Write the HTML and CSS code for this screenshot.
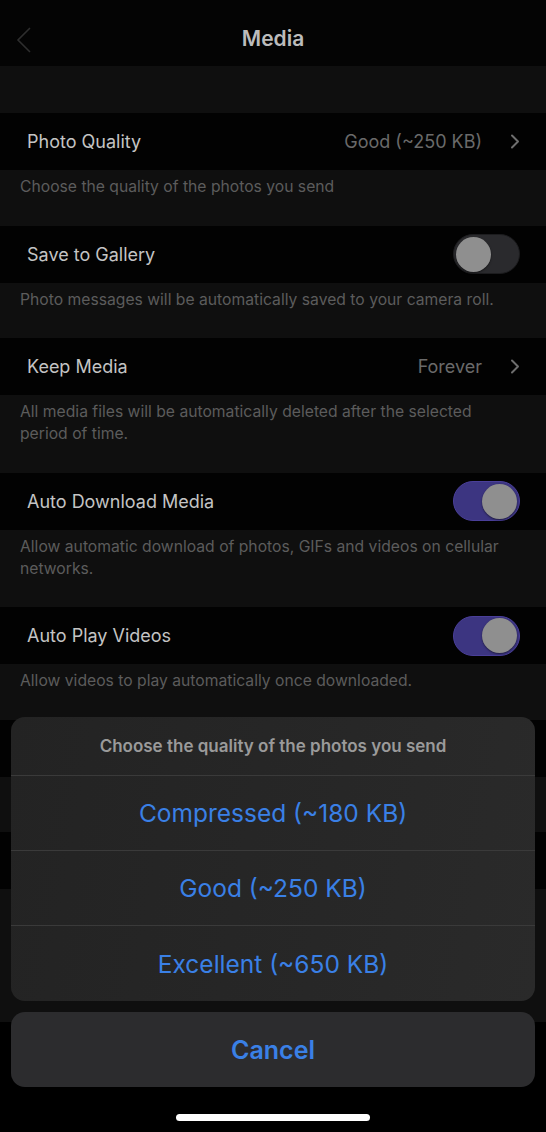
FILE: index.html
```html
<!DOCTYPE html>
<html lang="en">
<head>
<meta charset="utf-8">
<title>Media</title>
<link rel="stylesheet" href="styles.css">
</head>
<body>
<div class="screen">
  <header class="nav">
    <svg class="back" width="16" height="26" viewBox="0 0 16 26"><path d="M14 1 L2 13 L14 25" fill="none" stroke="#2e2e2e" stroke-width="1.6"/></svg>
    <h1 class="title">Media</h1>
  </header>
  <div class="spacer"></div>

  <div class="row">
    <span class="label">Photo Quality</span>
    <span class="value">Good (~250 KB)</span>
    <svg class="chev" width="10" height="15" viewBox="0 0 10 15"><path d="M2 1.5 L8 7.5 L2 13.5" fill="none" stroke="#6e6e6e" stroke-width="2" stroke-linecap="round" stroke-linejoin="round"/></svg>
  </div>
  <p class="foot">Choose the quality of the photos you send</p>

  <div class="row">
    <span class="label">Save to Gallery</span>
    <span class="toggle"><span class="knob"></span></span>
  </div>
  <p class="foot">Photo messages will be automatically saved to your camera roll.</p>

  <div class="row">
    <span class="label">Keep Media</span>
    <span class="value">Forever</span>
    <svg class="chev" width="10" height="15" viewBox="0 0 10 15"><path d="M2 1.5 L8 7.5 L2 13.5" fill="none" stroke="#6e6e6e" stroke-width="2" stroke-linecap="round" stroke-linejoin="round"/></svg>
  </div>
  <p class="foot">All media files will be automatically deleted after the selected period of time.</p>

  <div class="row">
    <span class="label">Auto Download Media</span>
    <span class="toggle on"><span class="knob"></span></span>
  </div>
  <p class="foot">Allow automatic download of photos, GIFs and videos on cellular networks.</p>

  <div class="row">
    <span class="label">Auto Play Videos</span>
    <span class="toggle on"><span class="knob"></span></span>
  </div>
  <p class="foot">Allow videos to play automatically once downloaded.</p>

  <div class="row"></div>
  <p class="foot">&nbsp;</p>
  <div class="row"></div>
  <div class="foot tall"></div>

  <div class="sheet">
    <div class="group">
      <div class="sheet-title">Choose the quality of the photos you send</div>
      <div class="option">Compressed (~180 KB)</div>
      <div class="option">Good (~250 KB)</div>
      <div class="option">Excellent (~650 KB)</div>
    </div>
    <div class="cancel">Cancel</div>
  </div>
  <div class="home"></div>
</div>
</body>
</html>
```
FILE: styles.css
```css
* { box-sizing: border-box; }
html, body { margin: 0; padding: 0; background: #000; }
body {
  font-family: Inter, "Noto Sans", "Liberation Sans", sans-serif;
  width: 546px;
  height: 1132px;
  overflow: hidden;
}
.screen {
  position: relative;
  width: 546px;
  height: 1132px;
  background: #000;
  display: flex;
  flex-direction: column;
}
.nav {
  height: 66px;
  flex: none;
  background: #040404;
  display: flex;
  align-items: center;
  justify-content: center;
  padding-top: 10px;
  position: relative;
}
.back {
  position: absolute;
  left: 16px;
  top: 27px;
}
.title {
  margin: 0;
  font-size: 21px;
  font-weight: 600;
  color: #bcbcbc;
}
.spacer {
  height: 47px;
  flex: none;
  background: #0f0f0f;
}
.row {
  height: 57px;
  flex: none;
  background: #020202;
  display: flex;
  align-items: center;
  padding: 0 26px 0 27px;
}
.label {
  font-size: 18px;
  color: #c4c4c4;
  flex: 1;
}
.value {
  font-size: 18px;
  color: #6a6a6a;
  margin-right: 28px;
}
.chev { flex: none; margin-right: 0; }
.foot {
  margin: 0;
  flex: none;
  background: #0f0f0f;
  padding: 6px 40px 27.5px 20px;
  font-size: 15.7px;
  line-height: 22px;
  color: #5c5c5c;
}
.foot.tall { height: 133px; padding: 0; }
.toggle {
  width: 67px;
  height: 40px;
  border-radius: 20px;
  background: #2a2a2d;
  border: 1px solid #1c1c1e;
  display: flex;
  align-items: center;
  padding: 0 2px;
  margin-right: 0;
}
.toggle.on {
  background: #3c3581;
  border-color: #4a3f99;
  justify-content: flex-end;
}
.knob {
  width: 35px;
  height: 35px;
  border-radius: 50%;
  background: #8f8f8f;
  box-shadow: 0 1px 2px rgba(0,0,0,0.5);
}
.sheet {
  position: absolute;
  left: 11px;
  right: 11px;
  bottom: 45px;
  display: flex;
  flex-direction: column;
  gap: 11px;
}
.group {
  background: linear-gradient(100deg, #232323 0%, #272727 60%, #2a2a2a 100%);
  border-radius: 14px;
  overflow: hidden;
}
.sheet-title {
  height: 59px;
  display: flex;
  align-items: center;
  justify-content: center;
  font-size: 17px;
  font-weight: 600;
  color: #9a9a9a;
  border-bottom: 1px solid #3a3a3a;
}
.option {
  height: 75px;
  display: flex;
  align-items: center;
  justify-content: center;
  font-size: 24.5px;
  color: #3a80e6;
  border-bottom: 1px solid #3a3a3a;
}
.option:last-child { border-bottom: none; }
.cancel {
  height: 75px;
  border-radius: 14px;
  background: #2c2c2e;
  display: flex;
  align-items: center;
  justify-content: center;
  font-size: 25px;
  font-weight: 600;
  color: #3a80e6;
}
.home {
  position: absolute;
  left: 176px;
  top: 1114px;
  width: 194px;
  height: 7px;
  border-radius: 4px;
  background: #fff;
}
```
